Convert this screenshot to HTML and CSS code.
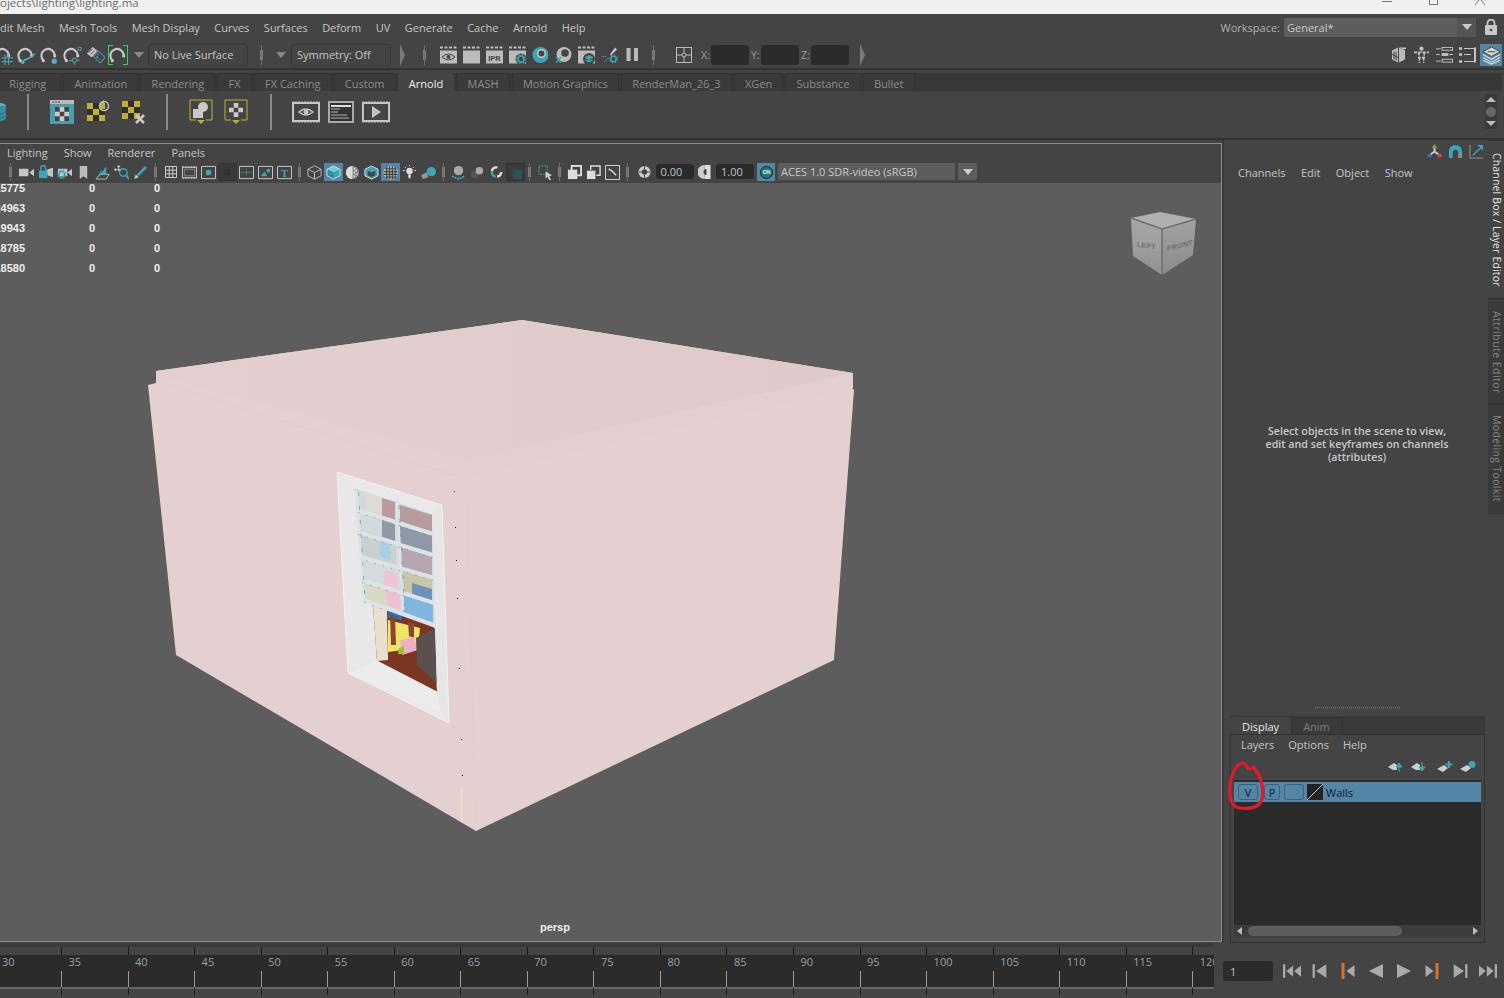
FILE: index.html
```html
<!DOCTYPE html>
<html lang="en">
<head>
<meta charset="utf-8">
<title>Maya</title>
<link rel="stylesheet" href="styles.css">
</head>
<body>
<svg class="defs" aria-hidden="true">
<symbol id="mag" viewBox="0 0 20 20"><path d="M3.500 15A7 7 0 1 1 15.500 10" fill="none" stroke="#c6c6c6" stroke-width="2.200"/><circle cx="3.500" cy="15.500" r="1.700" fill="#c6c6c6"/><circle cx="15.500" cy="10.500" r="1.700" fill="#c6c6c6"/></symbol>
<symbol id="s-grid" viewBox="0 0 20 20"><use href="#mag"/><path d="M8 12.500h12M8 16.500h12M11.500 9v11M15.500 9v11" stroke="#4ab4c4" fill="none"/></symbol>
<symbol id="s-curve" viewBox="0 0 20 20"><use href="#mag"/><path d="M6 19c0-7 7-3 13-11" stroke="#4ab4c4" stroke-width="1.600" fill="none"/><circle cx="6" cy="17" r="1.800" fill="#4ab4c4"/></symbol>
<symbol id="s-point" viewBox="0 0 20 20"><use href="#mag"/><circle cx="15" cy="16" r="2.800" fill="#4ab4c4"/></symbol>
<symbol id="s-view" viewBox="0 0 20 20"><use href="#mag"/><circle cx="17.500" cy="3" r="1.800" fill="none" stroke="#4ab4c4"/><circle cx="12" cy="15" r="2.200" fill="none" stroke="#4ab4c4"/><path d="M9.500 15.500H6M12 17.500V20M14.500 15h3" stroke="#4ab4c4"/></symbol>
<symbol id="s-surf" viewBox="0 0 20 20"><path d="M1 8l6-7 5 4-6 7z" fill="#c6c6c6"/><path d="M3 7l4-4M5 9l4-4" stroke="#444"/><path d="M8 11l5-6 7 7-5 6z" fill="none" stroke="#4ab4c4"/><path d="M11 11l5 4M13 8l-2 6" stroke="#4ab4c4" stroke-dasharray="2 1"/></symbol>
<symbol id="clap" viewBox="0 0 17 18"><path d="M0 1.500h17" stroke="#bbb" stroke-width="2" stroke-dasharray="3 1.500"/><rect y="4.500" width="17" height="13" fill="#bbb"/></symbol>
<symbol id="r-eye" viewBox="0 0 17 18"><use href="#clap"/><path d="M2 11q6.500-6 13 0q-6.500 6-13 0z" fill="none" stroke="#444"/><circle cx="8.500" cy="11" r="2" fill="#444"/></symbol>
<symbol id="r-ipr" viewBox="0 0 17 18"><use href="#clap"/><text x="8.500" y="15" class="ipr" text-anchor="middle">IPR</text></symbol>
<symbol id="gear" viewBox="0 0 10 10"><circle cx="5" cy="5" r="3" fill="none" stroke="#3ba6b5" stroke-width="1.600"/><circle cx="5" cy="5" r="4.300" fill="none" stroke="#3ba6b5" stroke-width="1.400" stroke-dasharray="1.600 1.800"/></symbol>
<symbol id="r-gear" viewBox="0 0 17 18"><use href="#clap"/><circle cx="12" cy="13" r="5.500" fill="#444"/><use href="#gear" x="7" y="8" width="10" height="10"/></symbol>
<symbol id="r-hyper" viewBox="0 0 17 17"><circle cx="8.500" cy="8.500" r="8" fill="#3ba6b5"/><circle cx="9.500" cy="7" r="4.500" fill="#c8c8c8"/><circle cx="9.500" cy="7" r="3" fill="#444"/></symbol>
<symbol id="r-x" viewBox="0 0 17 17"><circle cx="9" cy="8" r="7.500" fill="#bbb"/><circle cx="10" cy="6.500" r="3.800" fill="#444"/><text x="3.500" y="16.500" class="tx" text-anchor="middle">x</text></symbol>
<symbol id="r-stack" viewBox="0 0 17 18"><use href="#clap"/><circle cx="11" cy="13" r="6" fill="#444"/><path d="M7 11.500l4-2 4 2-4 2zM7 14l4 2 4-2" fill="#3ba6b5" stroke="#3ba6b5"/></symbol>
<symbol id="r-brush" viewBox="0 0 17 17"><path d="M9 8L14 1l2 2-6 6z" fill="#c4c4c4"/><path d="M1 10h4M4 15l4-4" stroke="#3ba6b5" stroke-dasharray="2 1"/><use href="#gear" x="8" y="8" width="9" height="9"/></symbol>
<symbol id="pause" viewBox="0 0 12 14"><rect width="4" height="13" fill="#bbb"/><rect x="7.500" width="4" height="13" fill="#bbb"/></symbol>
<symbol id="box" viewBox="0 0 16 16"><rect x=".5" y=".5" width="15" height="15" fill="none" stroke="#bbb"/><path d="M8 0v16M0 8h16" stroke="#bbb"/><circle cx="8" cy="8" r="2" fill="#444" stroke="#bbb"/></symbol>
<symbol id="cube-sm" viewBox="0 0 17 17"><path d="M2 4l6-3v15l-6-3zM9 1l6 3v9l-6 3z" fill="#bbb"/><path d="M4 5v8M6 5v9M2 8l6 3" stroke="#444"/><path d="M9 1h7v1l-2 1z" fill="#ccc"/></symbol>
<symbol id="man" viewBox="0 0 16 17"><circle cx="8" cy="2.500" r="2" fill="#c4c4c4"/><path d="M1 6h14M5.500 6v5h5V6M6 11v5M10 11v5" stroke="#c4c4c4" stroke-width="1.500" stroke-dasharray="3 1" fill="none"/></symbol>
<symbol id="list" viewBox="0 0 18 17"><path d="M0 2h5M0 8h4M0 15h5M14 8h4" stroke="#c4c4c4"/><rect x="6.500" y=".5" width="11" height="3" fill="none" stroke="#c4c4c4"/><rect x="6.500" y="13" width="11" height="3" fill="none" stroke="#c4c4c4"/><rect x="6" y="6.500" width="7" height="3" fill="#c4c4c4"/></symbol>
<symbol id="tool" viewBox="0 0 17 17"><path d="M0 2h3M0 8h3M0 15h3" stroke="#c4c4c4" stroke-width="2.500"/><path d="M5 2h11M5 8h7M5 15h10" stroke="#c4c4c4"/><path d="M16 1v15" stroke="#c4c4c4" stroke-width="2"/></symbol>
<symbol id="layers" viewBox="0 0 20 20"><path d="M10 1l9 5-9 5-9-5z" fill="#d4d4d4" stroke="#444"/><path d="M1 9l9 5 9-5M1 12l9 5 9-5M1 15l9 4 9-4" fill="none" stroke="#ddd" stroke-width="1.200"/><path d="M6 6h8" stroke="#444"/></symbol>
<symbol id="cyl" viewBox="0 0 8 20"><ellipse cx="0" cy="4" rx="6" ry="3" fill="#4fb3c2"/><path d="M-6 4v12a6 3 0 0 0 12 0V4" fill="#3b8e9c"/><path d="M-6 9a6 3 0 0 0 12 0M-6 13a6 3 0 0 0 12 0" stroke="#2d6f7a" fill="none"/></symbol>
<symbol id="check" viewBox="0 0 24 24"><path d="M0 3h6v6H0zM12 3h6v6h-6zM6 9h6v6H6zM0 15h6v6H0zM12 15h6v6h-6z" fill="#c2ad35"/><path d="M6 3h6v6H6zM0 9h6v6H0zM12 9h6v6h-6zM6 15h6v6H6z" fill="#2e2e2e"/></symbol>
<symbol id="sh-tex" viewBox="0 0 24 24"><rect width="24" height="24" fill="#4a9fae"/><rect y="0" width="24" height="4" fill="#bbb"/><path d="M2 2h2M5 2h2M8 2h2" stroke="#444"/><rect x="5" y="7" width="14" height="14" fill="#ccc"/><path d="M5 7h4.700v4.700H5zM14.300 7H19v4.700h-4.700zM9.700 11.700h4.600v4.600H9.700zM5 16.300h4.700V21H5zM14.300 16.300H19V21h-4.700z" fill="#444"/></symbol>
<symbol id="sh-ref" viewBox="0 0 24 24"><use href="#check"/><circle cx="17" cy="6" r="4.500" fill="none" stroke="#bbb" stroke-width="1.500"/><path d="M17 0l-3 2 3 2z" fill="#bbb"/></symbol>
<symbol id="sh-del" viewBox="0 0 24 24"><use href="#check" y="-2"/><path d="M14 15l8 8M22 15l-8 8" stroke="#c9c9c9" stroke-width="2.500"/></symbol>
<symbol id="sh-yel1" viewBox="0 0 24 26"><path d="M6 1H1v20h6M18 1h5v20h-6" fill="none" stroke="#c2ad35"/><path d="M6 1h12" stroke="#c2ad35"/><path d="M8 21h8l-4 4z" fill="#c2ad35"/><rect x="4" y="10" width="10" height="9" fill="#c8c8c8"/><circle cx="14" cy="8" r="5" fill="#c8c8c8"/></symbol>
<symbol id="sh-yel2" viewBox="0 0 24 26"><path d="M6 1H1v20h6M18 1h5v20h-6M6 1h12" fill="none" stroke="#c2ad35"/><path d="M8 21h8l-4 4z" fill="#c2ad35"/><rect x="5" y="4" width="14" height="14" fill="#c9c9c9"/><path d="M5 4h4.700v4.700H5zM14.300 4H19v4.700h-4.700zM9.700 8.700h4.600v4.600H9.700zM5 13.300h4.700V18H5zM14.300 13.300H19V18h-4.700z" fill="#444"/></symbol>
<symbol id="frm" viewBox="0 0 28 22"><rect x="1" y="2" width="26" height="18" fill="none" stroke="#c4c4c4" stroke-width="2"/><path d="M0 1h28M0 21h28" stroke="#c4c4c4" stroke-dasharray="2 1"/></symbol>
<symbol id="sh-eye" viewBox="0 0 28 22"><use href="#frm"/><path d="M7 11q7-6 14 0q-7 6-14 0z" fill="none" stroke="#c4c4c4" stroke-width="1.500"/><circle cx="14" cy="11" r="2.500" fill="#c4c4c4"/></symbol>
<symbol id="sh-log" viewBox="0 0 26 22"><rect x="0" y="0" width="26" height="22" fill="#aaa"/><rect x="2" y="2" width="22" height="18" fill="#333"/><rect x="3" y="4" width="20" height="2" fill="#ddd"/><path d="M3 8h9M3 11h7M3 14h16M3 17h18" stroke="#888" stroke-width="1.500"/></symbol>
<symbol id="sh-play" viewBox="0 0 28 22"><use href="#frm"/><path d="M10 5l9 6-9 6z" fill="#c4c4c4"/></symbol>
<symbol id="cam" viewBox="0 0 16 16"><rect x="0" y="4" width="10" height="8" fill="#c4c4c4"/><path d="M11 8l5-4v8z" fill="#c4c4c4"/></symbol>
<symbol id="cam-lock" viewBox="0 0 16 16"><path d="M9 5l1 6 6 2V3z" fill="#c4c4c4"/><rect x="1" y="6" width="9" height="8" fill="#3ba6b5"/><path d="M3 6V3a2.500 2.500 0 0 1 5 0v3" fill="none" stroke="#3ba6b5" stroke-width="1.500"/></symbol>
<symbol id="cam-gear" viewBox="0 0 16 16"><rect x="1" y="4" width="10" height="8" fill="#c4c4c4"/><path d="M11 8l5-4v8z" fill="#c4c4c4"/><use href="#gear" y="5" width="10" height="10"/></symbol>
<symbol id="bm" viewBox="0 0 16 16"><path d="M4 1h8v14l-4-3-4 3z" fill="#bbb"/></symbol>
<symbol id="plane" viewBox="0 0 16 16"><path d="M1 15l4-5h10l-3 5z" fill="none" stroke="#bbb"/><path d="M6 10l6-9v9z" fill="#3ba6b5"/><path d="M2 14l5-9v5z" fill="#3ba6b5"/></symbol>
<symbol id="lens" viewBox="0 0 16 16"><circle cx="10" cy="8" r="4" fill="none" stroke="#3ba6b5" stroke-width="1.500"/><path d="M13 11l3 4" stroke="#3ba6b5" stroke-width="2"/><path d="M5 1v6M1 5h6" stroke="#ccc"/><path d="M5 0l2 2H3zM0 5l2-2v4z" fill="#ccc"/></symbol>
<symbol id="pen" viewBox="0 0 16 16"><path d="M4 10L13 1l2 2-9 9z" fill="#3ba6b5"/><path d="M1 15l2-5 3 3z" fill="#ccc"/></symbol>
<symbol id="grid" viewBox="0 0 12 12"><path d="M.5.500h11v11H.5zM4.200.500v11M7.800.500v11M.5 4.200h11M.5 7.800h11" fill="none" stroke="#ccc"/></symbol>
<symbol id="gate" viewBox="0 0 16 14"><path d="M.5 1.500h15v11H.5z" fill="none" stroke="#ccc"/><path d="M2.500 3.500h11v7h-11z" fill="none" stroke="#888"/><path d="M0 1h16M0 13h16" stroke="#ccc" stroke-dasharray="2 1"/></symbol>
<symbol id="rdot" viewBox="0 0 16 14"><path d="M.5.500h15v13H.5z" fill="none" stroke="#ccc"/><circle cx="8" cy="7" r="3" fill="#3ba6b5"/></symbol>
<symbol id="rdark" viewBox="0 0 16 14"><circle cx="8" cy="7" r="4" fill="#303030"/></symbol>
<symbol id="rcross" viewBox="0 0 16 14"><path d="M.5.500h15v13H.5z" fill="none" stroke="#ccc"/><path d="M2 7h12M8 3v8" stroke="#3ba6b5" stroke-dasharray="1 1"/></symbol>
<symbol id="rimg" viewBox="0 0 16 14"><path d="M.5.500h15v13H.5z" fill="none" stroke="#ccc"/><path d="M3 11l4-5 3 5z" fill="#3ba6b5"/><circle cx="11" cy="5" r="2" fill="#3ba6b5"/></symbol>
<symbol id="rt" viewBox="0 0 16 14"><path d="M.5.500h15v13H.5z" fill="none" stroke="#ccc"/><text x="8" y="11.500" class="t" text-anchor="middle">T</text></symbol>
<symbol id="wire" viewBox="0 0 16 16"><path d="M8 1l7 3.500v7L8 15l-7-3.500v-7zM1 4.500L8 8l7-3.500M8 8v7" fill="none" stroke="#bbb"/></symbol>
<symbol id="solid" viewBox="0 0 16 16"><path d="M8 1l7 3.500-7 3.500-7-3.500z" fill="#6fd0dd"/><path d="M1 4.500L8 8v7l-7-3.500z" fill="#2f8c9c"/><path d="M15 4.500L8 8v7l7-3.500z" fill="#3ba6b5"/><path d="M8 1l7 3.500v7L8 15l-7-3.500v-7z" fill="none" stroke="#ddd"/></symbol>
<symbol id="half" viewBox="0 0 16 16"><circle cx="8" cy="8" r="7" fill="#888"/><path d="M8 1a7 7 0 0 0 0 14z" fill="#ddd"/><path d="M10 3v2M12 5v2M10 7v2M13 9v2M10 11v2" stroke="#ddd" stroke-width="1.500"/></symbol>
<symbol id="boxtx" viewBox="0 0 16 16"><path d="M8 1l7 3.500v7L8 15l-7-3.500v-7z" fill="#3ba6b5" stroke="#ddd"/><path d="M4 6l4 2 4-2v5l-4 2-4-2z" fill="#444"/></symbol>
<symbol id="chk" viewBox="0 0 16 16"><circle cx="8" cy="8" r="7.500" fill="#bbb"/><path d="M2 4h12M1 7h14M1 10h14M3 13h10M4 1v14M7 1v14M10 1v14M13 2v12" stroke="#444" stroke-width="1.300"/></symbol>
<symbol id="bulb" viewBox="0 0 16 16"><circle cx="8" cy="6.500" r="3.500" fill="#ddd"/><path d="M6.500 10h3l-.5 4H7z" fill="#ddd"/><path d="M1 6h2M13 6h2M3 2l1 1M13 2l-1 1M8 0v1" stroke="#ddd"/></symbol>
<symbol id="shad" viewBox="0 0 16 16"><circle cx="11" cy="7" r="5" fill="#3ba6b5"/><path d="M0 11l6-3 2 5-6 2z" fill="#999"/></symbol>
<symbol id="ball-grid" viewBox="0 0 16 16"><circle cx="8" cy="6" r="5" fill="#aaa"/><path d="M1 12l7 3 7-3" fill="none" stroke="#3ba6b5" stroke-width="2" stroke-dasharray="2 1"/></symbol>
<symbol id="balls" viewBox="0 0 16 16"><circle cx="5" cy="10" r="4" fill="#555"/><circle cx="10" cy="6" r="4" fill="#aaa"/></symbol>
<symbol id="ring" viewBox="0 0 14 14"><circle cx="7" cy="7" r="5" fill="none" stroke="#3ba6b5" stroke-width="2.500" stroke-dasharray="7 1.500 7 16"/><circle cx="7" cy="7" r="5" fill="none" stroke="#ddd" stroke-width="2.500" stroke-dasharray="8 9" stroke-dashoffset="-16"/></symbol>
<symbol id="dk" viewBox="0 0 16 16"><rect x="1" y="1" width="9" height="9" fill="#3c3c3c"/><rect x="5" y="5" width="10" height="10" fill="#2f5159"/></symbol>
<symbol id="sel" viewBox="0 0 16 16"><path d="M1 1h9v9H1z" fill="none" stroke="#3ba6b5" stroke-dasharray="2 1"/><path d="M8 7l7 4-3 1 2 4-2 .5-2-4-2 2z" fill="#ccc"/></symbol>
<symbol id="iso1" viewBox="0 0 16 16"><rect x="5" y="1" width="10" height="10" fill="none" stroke="#ddd" stroke-width="2"/><rect x="1" y="5" width="10" height="10" fill="#ddd"/></symbol>
<symbol id="iso2" viewBox="0 0 16 16"><path d="M5 5V1h10v10h-4" fill="none" stroke="#ddd" stroke-width="1.500"/><rect x="1" y="6" width="9" height="9" fill="#ddd"/></symbol>
<symbol id="iso3" viewBox="0 0 16 16"><path d="M.5.500h15v15H.5z" fill="none" stroke="#ddd"/><path d="M4 4l2 2M6 5l6 6" stroke="#ddd" stroke-width="1.500"/></symbol>
<symbol id="aper" viewBox="0 0 14 14"><circle cx="7" cy="7" r="6.500" fill="#ccc"/><circle cx="7" cy="7" r="3" fill="#444"/><path d="M7 0v4M13 7H9M7 14v-4M1 7h4" stroke="#444"/></symbol>
<symbol id="gam" viewBox="0 0 12 14"><path d="M6 0a6 6 0 0 0 0 14z" fill="#ccc"/><rect x="6" y="0" width="6" height="14" fill="#ddd"/><path d="M9 4a3 3 0 0 0 0 6z" fill="#444" transform="translate(-1 0)"/></symbol>
<symbol id="ocio" viewBox="0 0 16 16"><circle cx="8" cy="8" r="6.500" fill="#2a6f7c" stroke="#222"/><text x="8" y="10" class="ontxt" text-anchor="middle">ON</text></symbol>
<symbol id="axis" viewBox="0 0 16 16"><path d="M8 8V4M8 8l-4 3M8 8l4 3" stroke="#ccc" stroke-width="2"/><path d="M8 0l3 4H5z" fill="#77a83a"/><path d="M0 12l4-2 1 4H1z" fill="#3c6fd0"/><path d="M16 14h-4l-1-3 4-1z" fill="#d84a4a"/></symbol>
<symbol id="hsphere" viewBox="0 0 16 16"><path d="M1 15V8a7 7 0 0 1 14 0v7h-4V9a3 3 0 0 0-6 0v6z" fill="#3ba6b5"/><path d="M11 15V10h4v5z" fill="#888"/></symbol>
<symbol id="grow" viewBox="0 0 16 16"><path d="M1 1v14h14" fill="none" stroke="#999"/><path d="M4 12L14 3" stroke="#3ba6b5" stroke-width="1.600"/><path d="M15 1v6l-6-6z" fill="#3ba6b5"/></symbol>
<symbol id="l-up" viewBox="0 0 16 12"><path d="M1 6l6-4 3 2v5H6z" fill="#ccc"/><path d="M12 11V5M9 6l3-4 3 4z" stroke="#3ba6b5" fill="#3ba6b5"/></symbol>
<symbol id="l-dn" viewBox="0 0 16 12"><path d="M1 6l6-4 3 2v5H6z" fill="#ccc"/><path d="M12 1v6M9 6l3 4 3-4z" stroke="#3ba6b5" fill="#3ba6b5"/></symbol>
<symbol id="l-add" viewBox="0 0 16 12"><path d="M0 8l7-4 4 3-5 4z" fill="#ccc"/><path d="M12 0v7M8.500 3.500h7" stroke="#3ba6b5" stroke-width="2"/></symbol>
<symbol id="l-obj" viewBox="0 0 16 12"><path d="M0 8l7-4 4 3-5 4z" fill="#ccc"/><circle cx="12" cy="3.500" r="3.500" fill="#3ba6b5"/></symbol>
<symbol id="lock" viewBox="0 0 12 16"><rect y="6" width="12" height="10" rx="1" fill="#c8c8c8"/><path d="M2.500 6V4a3.500 3.500 0 0 1 7 0v2" fill="none" stroke="#c8c8c8" stroke-width="1.800"/><circle cx="6" cy="11" r="1.300" fill="#444"/></symbol>
<symbol id="t1" viewBox="0 0 16 14"><rect y="1" width="2" height="12" fill="#aaa"/><path d="M9 2L3 7l6 5zM16 2l-6 5 6 5z" fill="#aaa"/></symbol>
<symbol id="t2" viewBox="0 0 13 14"><rect y="1" width="2" height="12" fill="#aaa"/><path d="M12 1L3 7l9 6z" fill="#aaa"/></symbol>
<symbol id="t3" viewBox="0 0 13 16"><rect y="0" width="3" height="16" fill="#d8732c"/><path d="M13 2L5 8l8 6z" fill="#aaa"/></symbol>
<symbol id="t4" viewBox="0 0 14 16"><path d="M14 1L0 8l14 7z" fill="#aaa"/></symbol>
<symbol id="t5" viewBox="0 0 14 16"><path d="M0 1l14 7-14 7z" fill="#aaa"/></symbol>
<symbol id="t6" viewBox="0 0 13 16"><rect x="10" width="3" height="16" fill="#d8732c"/><path d="M0 2l8 6-8 6z" fill="#aaa"/></symbol>
<symbol id="t7" viewBox="0 0 13 14"><rect x="11" y="1" width="2" height="12" fill="#aaa"/><path d="M1 1l9 6-9 6z" fill="#aaa"/></symbol>
<symbol id="t8" viewBox="0 0 16 14"><rect x="14" y="1" width="2" height="12" fill="#aaa"/><path d="M7 2l6 5-6 5zM0 2l6 5-6 5z" fill="#aaa"/></symbol>
</svg>

<div class="app">
  <header class="titlebar">
    <span class="title-text">ojects\lighting\lighting.ma</span>
    <span class="win-ctl">
      <span class="win-min"></span>
      <span class="win-max"></span>
      <svg class="win-x" viewBox="0 0 12 5"><path d="M1 5L5 0M11 5L7 0" stroke="#777" fill="none"/></svg>
    </span>
  </header>

  <nav class="menubar">
    <span class="clip-e">Edit Mesh</span><span>Mesh Tools</span><span>Mesh Display</span><span>Curves</span><span>Surfaces</span><span>Deform</span><span>UV</span><span>Generate</span><span>Cache</span><span>Arnold</span><span>Help</span>
    <div class="workspace">
      <label>Workspace:</label>
      <div class="ws-combo"><span>General*</span><b class="ws-arrow"><i class="tri"></i></b></div>
      <svg class="ws-lock"><use href="#lock"/></svg>
    </div>
  </nav>

  <div class="statusbar">
    <span class="st first"><svg class="i18"><use href="#s-grid"/></svg></span>
    <span class="st"><svg class="i18"><use href="#s-curve"/></svg></span>
    <span class="st"><svg class="i18"><use href="#s-point"/></svg></span>
    <span class="st"><svg class="i18"><use href="#s-view"/></svg></span>
    <span class="st"><svg class="i18"><use href="#s-surf"/></svg></span>
    <span class="st bracket"><svg class="i18"><use href="#mag"/></svg></span>
    <span class="drop"><i class="tri dim"></i></span>
    <span class="live">No Live Surface</span>
    <span class="sep sep-a"></span>
    <span class="drop drop-b"><i class="tri dim"></i></span>
    <span class="live">Symmetry: Off</span>
    <span class="chev chev-a"></span>
    <span class="sep sep-b"></span>
    <span class="st"><svg class="i17"><use href="#r-eye"/></svg></span>
    <span class="st"><svg class="i17"><use href="#clap"/></svg></span>
    <span class="st"><svg class="i17"><use href="#r-ipr"/></svg></span>
    <span class="st"><svg class="i17"><use href="#r-gear"/></svg></span>
    <span class="st"><svg class="i17"><use href="#r-hyper"/></svg></span>
    <span class="st"><svg class="i17"><use href="#r-x"/></svg></span>
    <span class="st"><svg class="i17"><use href="#r-stack"/></svg></span>
    <span class="st"><svg class="i17"><use href="#r-brush"/></svg></span>
    <span class="st"><svg class="i13"><use href="#pause"/></svg></span>
    <span class="sep sep-c"></span>
    <span class="st st-box"><svg class="i16"><use href="#box"/></svg></span>
    <span class="xyz">X:</span><span class="xyz-f"></span>
    <span class="xyz">Y:</span><span class="xyz-f"></span>
    <span class="xyz">Z:</span><span class="xyz-f"></span>
    <span class="chev chev-b"></span>
    <div class="st-right">
      <svg class="i17"><use href="#cube-sm"/></svg>
      <svg class="i17"><use href="#man"/></svg>
      <svg class="i17"><use href="#list"/></svg>
      <svg class="i17"><use href="#tool"/></svg>
      <span class="st-layers"><svg class="i18"><use href="#layers"/></svg></span>
    </div>
  </div>
  <div class="rule"></div>

  <div class="tabs">
    <span class="tab t-first">Rigging</span><span class="tab">Animation</span><span class="tab">Rendering</span><span class="tab">FX</span><span class="tab">FX Caching</span><span class="tab">Custom</span><span class="tab active">Arnold</span><span class="tab">MASH</span><span class="tab">Motion Graphics</span><span class="tab">RenderMan_26_3</span><span class="tab">XGen</span><span class="tab">Substance</span><span class="tab">Bullet</span>
  </div>

  <div class="shelf">
    <svg class="cyl"><use href="#cyl"/></svg>
    <span class="sh-sep sh-s1"></span>
    <svg class="sh-i sh-a"><use href="#sh-tex"/></svg>
    <svg class="sh-i sh-b"><use href="#sh-ref"/></svg>
    <svg class="sh-i sh-b2"><use href="#sh-del"/></svg>
    <span class="sh-sep sh-s2"></span>
    <svg class="sh-y"><use href="#sh-yel1"/></svg>
    <svg class="sh-y sh-c"><use href="#sh-yel2"/></svg>
    <span class="sh-sep sh-s3"></span>
    <svg class="sh-f"><use href="#sh-eye"/></svg>
    <svg class="sh-f sh-d"><use href="#sh-log"/></svg>
    <svg class="sh-f sh-d"><use href="#sh-play"/></svg>
    <div class="sh-scroll"><i class="up"></i><i class="dot"></i><i class="dn"></i></div>
  </div>
  <div class="rule-thin"></div>

  <main class="main">
    <section class="view-frame">
      <div class="panel-menu"><span>Lighting</span><span>Show</span><span>Renderer</span><span>Panels</span></div>
      <div class="panel-bar">
        <span class="sep sep-p0"></span>
        <span class="c"><svg class="i15"><use href="#cam"/></svg></span>
        <span class="c"><svg class="i15"><use href="#cam-lock"/></svg></span>
        <span class="c"><svg class="i15"><use href="#cam-gear"/></svg></span>
        <span class="c"><svg class="i15"><use href="#bm"/></svg></span>
        <span class="c"><svg class="i15"><use href="#plane"/></svg></span>
        <span class="c"><svg class="i15"><use href="#lens"/></svg></span>
        <span class="c"><svg class="i15"><use href="#pen"/></svg></span>
        <span class="sep sep-p"></span>
        <span class="c"><svg class="i12"><use href="#grid"/></svg></span>
        <span class="c"><svg class="i15"><use href="#gate"/></svg></span>
        <span class="c"><svg class="i15"><use href="#rdot"/></svg></span>
        <span class="c dark"><svg class="i15"><use href="#rdark"/></svg></span>
        <span class="c"><svg class="i15"><use href="#rcross"/></svg></span>
        <span class="c"><svg class="i15"><use href="#rimg"/></svg></span>
        <span class="c"><svg class="i15"><use href="#rt"/></svg></span>
        <span class="sep sep-p"></span>
        <span class="c"><svg class="i15"><use href="#wire"/></svg></span>
        <span class="c on"><svg class="i15"><use href="#solid"/></svg></span>
        <span class="c"><svg class="i15"><use href="#half"/></svg></span>
        <span class="c"><svg class="i15"><use href="#boxtx"/></svg></span>
        <span class="c on"><svg class="i15"><use href="#chk"/></svg></span>
        <span class="c"><svg class="i15"><use href="#bulb"/></svg></span>
        <span class="c"><svg class="i15"><use href="#shad"/></svg></span>
        <span class="sep sep-p"></span>
        <span class="c"><svg class="i15"><use href="#ball-grid"/></svg></span>
        <span class="c"><svg class="i15"><use href="#balls"/></svg></span>
        <span class="c"><svg class="i13"><use href="#ring"/></svg></span>
        <span class="c dark"><svg class="i15"><use href="#dk"/></svg></span>
        <span class="sep sep-q"></span>
        <span class="c"><svg class="i15"><use href="#sel"/></svg></span>
        <span class="sep sep-r"></span>
        <span class="c"><svg class="i15"><use href="#iso1"/></svg></span>
        <span class="c"><svg class="i15"><use href="#iso2"/></svg></span>
        <span class="c"><svg class="i15"><use href="#iso3"/></svg></span>
        <span class="sep sep-s"></span>
        <span class="c c-ap"><svg class="i13"><use href="#aper"/></svg></span>
        <span class="num">0.00</span>
        <span class="c c-ga"><svg class="i13"><use href="#gam"/></svg></span>
        <span class="num">1.00</span>
        <span class="c on c-on"><svg class="i15"><use href="#ocio"/></svg></span>
        <span class="ocio">ACES 1.0 SDR-video (sRGB)</span>
        <span class="ocio-arrow"><i class="tri"></i></span>
      </div>
      <div class="canvas">
        <svg class="scene" viewBox="0 183 1221 758">
          <defs>
            <linearGradient id="roof" x1="0" x2="1" y1="0" y2="0"><stop offset="0" stop-color="#e3cfd1"/><stop offset="1" stop-color="#dfc9ca"/></linearGradient>
            <linearGradient id="cubeL" x1="0" x2="0" y1="0" y2="1"><stop offset="0" stop-color="#a8a8a8"/><stop offset="1" stop-color="#929292"/></linearGradient>
            <linearGradient id="cubeR" x1="0" x2="0" y1="0" y2="1"><stop offset="0" stop-color="#a2a2a2"/><stop offset="1" stop-color="#8a8a8a"/></linearGradient>
          </defs>
          <polygon points="156,371 522,320 853,373 852,388 854,390 834,660 476,831 176,655 148,385 156,383" fill="#e4cfd1"/>
          <polygon points="156,375 156,371 522,320 853,373 466,460" fill="url(#roof)"/>
          <polygon points="466,460 853,373 853,388 467,477" fill="#e3ced0"/>
          <path d="M156 381L460 477" stroke="#e0cbcd" fill="none"/>
          <path d="M466 462L476 831" stroke="#e3cdcf" fill="none"/>
          <!-- window -->
          <polygon points="337,472 442,505 449,723 348,673" fill="#e9e9e9"/>
          <polygon points="354,488 432,514 437,692 377,661 373,605 363,601" fill="#d3d9dd"/>
          <polygon points="367,493 382,498 382,520 367,514" fill="#dedcd2"/>
          <polygon points="382,498 395,502 395,525 382,520" fill="#b99b9c"/>
          <polygon points="400,505 432,515 432,535 400,526" fill="#b89c9d"/>
          <polygon points="400,526 432,535 432,555 400,547" fill="#8e98a6"/>
          <polygon points="400,547 432,555 432,579 400,570" fill="#b6a6b4"/>
          <polygon points="400,570 432,579 432,603 400,594" fill="#c9c6a8"/>
          <polygon points="412,583 432,589 432,603 412,598" fill="#6e93b8"/>
          <polygon points="403,594 433,603 433,626 403,617" fill="#7fb5df"/>
          <polygon points="382,520 395,525 395,545 382,540" fill="#8f98a4"/>
          <polygon points="360,530 396,541 396,566 360,555" fill="#c8d0d0"/>
          <polygon points="380,536 390,540 390,560 380,556" fill="#a6d0e4"/>
          <polygon points="362,556 396,566 396,590 362,580" fill="#d4dade"/>
          <polygon points="384,570 397,574 397,590 384,586" fill="#eec4d4"/>
          <polygon points="364,580 397,590 400,612 368,600" fill="#d8d8c4"/>
          <polygon points="385,588 402,594 400,610 388,605" fill="#eebfd2"/>
          <polygon points="387,611 434,626 437,692 377,661 373,605" fill="#7b3520"/>
          <polygon points="373,605 387,610 388,660 377,661" fill="#e8dfcc"/>
          <polygon points="388,620 420,628 418,648 388,652" fill="#f0e567"/>
          <polygon points="388,610 402,615 402,620 388,618" fill="#1f74b4"/>
          <polygon points="390,615 395,616 396,645 391,645" fill="#8c4632"/>
          <polygon points="408,622 414,624 414,638 409,636" fill="#8c4632"/>
          <polygon points="400,640 414,637 418,650 402,655" fill="#eeb0c8"/>
          <polygon points="399,648 404,646 404,654 398,654" fill="#9ac23c"/>
          <polygon points="416,638 435,628 437,684 417,665" fill="#5e4f4f"/>
          <g stroke="#dde2e6" stroke-width="4" fill="none">
            <path d="M358 510L433 534"/><path d="M358 532L433 555"/><path d="M358 556L434 578"/><path d="M362 580L434 603"/><path d="M364 600L436 626"/>
            <path d="M397 500L403 610" stroke-width="3"/>
            <path d="M356 492L363 600"/>
          </g>
          <g stroke="#6f9ab2" fill="none" stroke-dasharray="1.500 7" stroke-opacity=".8">
            <path d="M358 512.500L433 536.500"/><path d="M358 534.500L433 557.500"/><path d="M358 558.500L434 580.500"/><path d="M362 582.500L434 605.500"/><path d="M364 602.500L436 628.500"/>
            <path d="M358.500 492L365 600" stroke-dasharray="4 10"/><path d="M399 505L404.500 606" stroke-dasharray="4 10"/>
          </g>
          <polygon points="349,674 376,660 438,692 441,712" fill="#ececec"/>
          <polygon points="437,692 432,514 442,505 449,723 441,712" fill="#e6e6e6"/>
          <polygon points="337,472 354,488 363,601 376,660 349,674" fill="#e8e8e8"/>
          <path d="M337 472L442 505L449 723L348 673Z" fill="none" stroke="#f2f2f2"/>
          <g fill="#111">
            <rect x="454" y="491" width="1" height="1"/><rect x="455" y="527" width="1" height="1"/><rect x="456" y="560" width="1" height="1"/><rect x="457" y="598" width="1" height="1"/><rect x="459" y="668" width="1" height="1"/><rect x="461" y="739" width="1" height="1"/><rect x="462" y="775" width="1" height="1"/>
          </g>
          <path d="M461.500 790V822" stroke="#e9e5b8" stroke-width="1.500"/>
          <!-- view cube -->
          <polygon points="1131,218 1160,212 1196,219 1162,229" fill="#b0b0b0"/>
          <polygon points="1131,218 1162,229 1162,275 1133,256" fill="url(#cubeL)"/>
          <polygon points="1162,229 1196,219 1193,255 1162,275" fill="url(#cubeR)"/>
          <path d="M1131 218L1162 229L1196 219M1162 229V275" stroke="#6e6e6e" stroke-width="1.500" fill="none"/>
          <text class="cube-t" transform="matrix(1 .12 0 1 1137 247)">LEFT</text>
          <text class="cube-t" transform="matrix(1 -.24 0 1 1167 251)">FRONT</text>
        </svg>
        <div class="hud">
          <span>15775</span><span>0</span><span>0</span>
          <span>24963</span><span>0</span><span>0</span>
          <span>19943</span><span>0</span><span>0</span>
          <span>18785</span><span>0</span><span>0</span>
          <span>18580</span><span>0</span><span>0</span>
        </div>
        <div class="persp">persp</div>
      </div>
    </section>

    <aside class="right">
      <div class="right-body">
        <div class="cb-icons">
          <svg class="i15"><use href="#axis"/></svg>
          <svg class="i15"><use href="#hsphere"/></svg>
          <svg class="i15"><use href="#grow"/></svg>
        </div>
        <div class="cb-menu"><span>Channels</span><span>Edit</span><span>Object</span><span>Show</span></div>
        <div class="cb-msg"><p>Select objects in the scene to view,<br>edit and set keyframes on channels<br>(attributes)</p></div>
        <div class="handle"></div>
        <div class="layers">
          <div class="l-tabs"><span class="l-tab active">Display</span><span class="l-tab">Anim</span></div>
          <div class="l-body">
            <div class="l-menu"><span>Layers</span><span>Options</span><span>Help</span></div>
            <div class="l-icons">
              <svg class="li"><use href="#l-up"/></svg>
              <svg class="li"><use href="#l-dn"/></svg>
              <svg class="li li-w"><use href="#l-add"/></svg>
              <svg class="li"><use href="#l-obj"/></svg>
            </div>
            <div class="l-list">
              <div class="l-row">
                <span class="btn btn-v">V</span>
                <span class="btn btn-p">P</span>
                <span class="btn btn-c"></span>
                <span class="swatch"></span>
                <span class="l-name">Walls</span>
              </div>
            </div>
            <div class="l-scroll"><i class="sl"></i><span class="thumb"></span><i class="sr"></i></div>
          </div>
          <svg class="red-ring" viewBox="1225 756 42 58"><path d="M1250 769C1246 769 1247 762 1242 763C1235 765 1231 775 1230 785C1229 797 1231 807 1240 808C1248 809 1259 809 1262 799C1264 790 1262 776 1253 767" fill="none" stroke="#e01b2b" stroke-width="3.200" stroke-linecap="round"/></svg>
        </div>
      </div>
      <div class="side-tabs">
        <div class="side on-t">Channel Box / Layer Editor</div>
        <div class="side s2">Attribute Editor</div>
        <div class="side s3">Modeling Toolkit</div>
      </div>
    </aside>
  </main>

  <footer class="timeline">
    <div class="tl-left">
      <div class="tl-gap"></div>
      <div class="tl-ruler">
        <div class="tl-cell tl-c0"><i class="tb"></i><span class="lab">30</span><i class="tk"></i><i class="tb tb2"></i></div>
        <div class="tl-cell"><i class="tb"></i><span class="lab">35</span><i class="tk"></i><i class="tb tb2"></i></div>
        <div class="tl-cell"><i class="tb"></i><span class="lab">40</span><i class="tk"></i><i class="tb tb2"></i></div>
        <div class="tl-cell"><i class="tb"></i><span class="lab">45</span><i class="tk"></i><i class="tb tb2"></i></div>
        <div class="tl-cell"><i class="tb"></i><span class="lab">50</span><i class="tk"></i><i class="tb tb2"></i></div>
        <div class="tl-cell"><i class="tb"></i><span class="lab">55</span><i class="tk"></i><i class="tb tb2"></i></div>
        <div class="tl-cell"><i class="tb"></i><span class="lab">60</span><i class="tk"></i><i class="tb tb2"></i></div>
        <div class="tl-cell"><i class="tb"></i><span class="lab">65</span><i class="tk"></i><i class="tb tb2"></i></div>
        <div class="tl-cell"><i class="tb"></i><span class="lab">70</span><i class="tk"></i><i class="tb tb2"></i></div>
        <div class="tl-cell"><i class="tb"></i><span class="lab">75</span><i class="tk"></i><i class="tb tb2"></i></div>
        <div class="tl-cell"><i class="tb"></i><span class="lab">80</span><i class="tk"></i><i class="tb tb2"></i></div>
        <div class="tl-cell"><i class="tb"></i><span class="lab">85</span><i class="tk"></i><i class="tb tb2"></i></div>
        <div class="tl-cell"><i class="tb"></i><span class="lab">90</span><i class="tk"></i><i class="tb tb2"></i></div>
        <div class="tl-cell"><i class="tb"></i><span class="lab">95</span><i class="tk"></i><i class="tb tb2"></i></div>
        <div class="tl-cell"><i class="tb"></i><span class="lab">100</span><i class="tk"></i><i class="tb tb2"></i></div>
        <div class="tl-cell"><i class="tb"></i><span class="lab">105</span><i class="tk"></i><i class="tb tb2"></i></div>
        <div class="tl-cell"><i class="tb"></i><span class="lab">110</span><i class="tk"></i><i class="tb tb2"></i></div>
        <div class="tl-cell"><i class="tb"></i><span class="lab">115</span><i class="tk"></i><i class="tb tb2"></i></div>
        <div class="tl-cell"><i class="tb"></i><span class="lab">120</span><i class="tk"></i><i class="tb tb2"></i></div>
      </div>
    </div>
    <div class="tl-right">
      <span class="frame">1</span>
      <div class="transport">
        <svg class="tp"><use href="#t1"/></svg>
        <svg class="tp"><use href="#t2"/></svg>
        <svg class="tp"><use href="#t3"/></svg>
        <svg class="tp"><use href="#t4"/></svg>
        <svg class="tp"><use href="#t5"/></svg>
        <svg class="tp"><use href="#t6"/></svg>
        <svg class="tp"><use href="#t7"/></svg>
        <svg class="tp"><use href="#t8"/></svg>
      </div>
    </div>
  </footer>
</div>
</body>
</html>
```
FILE: styles.css
```css
* { box-sizing: border-box; }
html, body { margin: 0; padding: 0; }
body { width: 1504px; height: 998px; overflow: hidden; background: #444; font: 11px/1 "Open Sans", "Liberation Sans", sans-serif; color: #c4c4c4; }
.defs { position: absolute; width: 0; height: 0; overflow: hidden; }
svg { display: block; flex: none; }
.ipr { font: bold 7.5px "Liberation Sans", sans-serif; fill: #444; }
.tx { font: bold 11px "Liberation Sans", sans-serif; fill: #3ba6b5; }
.t { font: bold 12px "Liberation Serif", serif; fill: #3ba6b5; }
.ontxt { font: bold 5.5px "Liberation Sans", sans-serif; fill: #cfe; }
.app { display: flex; flex-direction: column; width: 1504px; height: 998px; overflow: hidden; }

.i12 { width: 12px; height: 12px; } .i13 { width: 13px; height: 14px; } .i15 { width: 15px; height: 15px; }
.i16 { width: 16px; height: 16px; } .i17 { width: 17px; height: 18px; } .i18 { width: 19px; height: 19px; }

.tri { display: block; width: 0; height: 0; border: 5px solid transparent; border-top: 6px solid #ccc; border-bottom: 0; }
.tri.dim { border-top-color: #888; }
.sep { flex: none; width: 3px; height: 20px; background: linear-gradient(90deg, transparent 1px, #6e6e6e 1px 2px, transparent 2px), linear-gradient(#7c7c7c, #7c7c7c) center / 3px 10px no-repeat; }

/* title */
.titlebar { flex: none; height: 14px; background: #f0f0f0; display: flex; overflow: hidden; position: relative; }
.title-text { font: 11.5px/14px "Open Sans", sans-serif; color: #6c6c6c; margin-top: -4px; }
.win-ctl { margin-left: auto; display: flex; align-items: flex-start; }
.win-min { width: 10px; height: 1px; background: #777; margin: 1px 0 0 0; }
.win-max { width: 9px; height: 5px; border: 1px solid #777; border-top: 0; margin-left: 37px; }
.win-x { width: 12px; height: 5px; margin: 0 18px 0 36px; }

/* menu */
.menubar { flex: none; height: 28px; display: flex; align-items: center; gap: 14.5px; padding-bottom: 2px; }
.clip-e { margin-left: -6px; }
.workspace { margin-left: auto; display: flex; align-items: center; color: #b0b0b0; }
.ws-combo { width: 192px; height: 19px; margin-left: 4px; background: #5d5d5d; border-radius: 2px; display: flex; align-items: center; padding-left: 3px; color: #c8c8c8; position: relative; }
.ws-combo span { flex: 1; }
.ws-arrow { width: 19px; height: 19px; background: #545454; display: flex; align-items: center; justify-content: center; }
.ws-lock { width: 12px; height: 16px; margin: 0 7px 0 9px; }

/* status */
.statusbar { flex: none; height: 26px; display: flex; align-items: center; }
.st { flex: none; width: 23px; height: 22px; display: flex; align-items: center; justify-content: center; }
.st.first { margin-left: -8px; }
.bracket { position: relative; width: 22px; border: 1px solid transparent; }
.bracket::before, .bracket::after { content: ""; position: absolute; top: 0; bottom: 0; width: 4px; border: 1px solid #22e04a; }
.bracket::before { left: 0; border-right: 0; }
.bracket::after { right: 0; border-left: 0; }
.drop { flex: none; width: 19px; display: flex; justify-content: center; }
.drop-b { width: 21px; margin-left: 7px; }
.live { flex: none; width: 100px; height: 22px; line-height: 20px; padding-left: 5px; border: 1px solid #383838; border-radius: 3px; color: #c4c4c4; }
.sep-a { margin: 0 0 0 12px; }
.sep-b { margin-left: 18px; margin-right: 11px; }
.sep-c { margin-left: 8px; }
.chev { flex: none; height: 22px; background: #7a7a7a; clip-path: polygon(0 0, 100% 50%, 0 100%); width: 5px; }
.chev-a { margin-left: 9px; }
.chev-b { margin-left: 9px; }
.st-box { margin-left: 17px; width: 23px; }
.xyz { flex: none; width: 10px; color: #9a9a9a; font-size: 10.5px; }
.st-box + .xyz { margin-left: 6px; }
.xyz-f { flex: none; width: 38px; height: 20px; margin-right: 2px; background: #2b2b2b; border-radius: 3px; }
.st-right { margin-left: auto; display: flex; align-items: center; gap: 6px; margin-right: 2px; }
.st-layers { width: 22px; height: 22px; background: #5285a6; display: flex; align-items: center; justify-content: center; margin-left: -2px; }

.rule { flex: none; height: 5px; background: linear-gradient(#333 0 2px, #444 2px); }

/* tabs */
.tabs { flex: none; height: 18px; display: flex; gap: 2px; background: #383838; margin-right: 2px; overflow: hidden; }
.tab { flex: none; height: 18px; line-height: 19px; padding: 0 10.2px; background: #3a3a3a; border: 1px solid #333; border-bottom: 0; border-radius: 3px 3px 0 0; color: #8c8c8c; }
.tab.active { background: #444; color: #eee; border-color: #444; }
.t-first { margin-left: -2px; padding-right: 14px; }

/* shelf */
.shelf { flex: none; height: 47px; display: flex; align-items: center; position: relative; padding-bottom: 6px; }
.cyl { width: 8px; height: 20px; }
.sh-sep { flex: none; width: 2px; height: 36px; background: #8a8a8a; }
.sh-s1 { margin-left: 19px; }
.sh-i { width: 24px; height: 24px; }
.sh-a { margin-left: 21px; }
.sh-b { margin-left: 13px; }
.sh-b2 { margin-left: 11px; }
.sh-s2 { margin-left: 20px; }
.sh-y { width: 24px; height: 26px; }
.shelf .sh-y:not(.sh-c) { margin-left: 21px; }
.sh-c { margin-left: 11px; }
.sh-s3 { margin-left: 22px; }
.sh-f { width: 28px; height: 22px; }
.sh-s3 + .sh-f { margin-left: 20px; }
.sh-d { margin-left: 7px; }
.sh-scroll { margin-left: auto; margin-right: 7px; width: 12px; height: 35px; background: #3a3a3a; display: flex; flex-direction: column; align-items: center; justify-content: space-between; padding: 3px 0; }
.sh-scroll .up { width: 0; border: 5px solid transparent; border-bottom: 5px solid #bbb; border-top: 0; }
.sh-scroll .dn { width: 0; border: 5px solid transparent; border-top: 5px solid #bbb; border-bottom: 0; }
.sh-scroll .dot { width: 10px; height: 10px; border-radius: 50%; background: #666; }
.rule-thin { flex: none; height: 2px; background: #333; }

/* main */
.main { flex: none; height: 803px; display: flex; }
.view-frame { flex: none; width: 1222px; margin: 3px 0 1px; border: 1px solid #8c8c8c; border-left: 0; display: flex; flex-direction: column; }
.panel-menu { flex: none; height: 19px; display: flex; align-items: center; gap: 16px; padding: 0 0 2px 7px; background: #444; }
.panel-bar { flex: none; height: 20px; display: flex; align-items: flex-start; background: #444; }
.panel-bar .sep { height: 18px; }
.c { flex: none; width: 19px; height: 18px; display: flex; align-items: center; justify-content: center; }
.c.on { background: #5285a6; }
.c.dark { background: #3a3a3a; box-shadow: inset 0 0 0 1px #333; }
.sep-p0 { margin: 0 5px 0 9px; }
.sep-p { margin: 0 4.5px 0 3.5px; }
.sep-q { margin: 0 5px 0 3px; }
.sep-r { margin: 0 4px 0 3px; }
.sep-s { margin: 0 8px 0 4px; }
.c-ap { width: 15px; }
.num { flex: none; width: 38px; height: 15px; line-height: 15px; margin: 1px 0 0 3.5px; background: #2b2b2b; border-radius: 3px; color: #b8c4d0; padding-left: 5px; }
.c-ga { width: 16px; margin-left: 3px; }
.c-on { margin: 0 3px 0 3px; width: 18px; }
.ocio { flex: none; width: 177px; height: 17px; line-height: 17px; padding-left: 3px; background: #5d5d5d; border-radius: 2px 0 0 2px; color: #c8c8c8; }
.ocio-arrow { flex: none; width: 19px; height: 17px; margin-left: 3px; background: #5d5d5d; border-radius: 0 2px 2px 0; display: flex; align-items: center; justify-content: center; }
.canvas { flex: none; width: 1221px; height: 758px; background: #5d5d5d; position: relative; overflow: hidden; }
.scene { position: absolute; inset: 0; width: 1221px; height: 758px; }
.cube-t { font: bold 7.5px "Liberation Sans", sans-serif; fill: #6f6f6f; filter: blur(.4px); }
.hud { position: absolute; left: 0; top: -5px; display: grid; grid-template-columns: 25px 70px 65px; grid-auto-rows: 20px; align-items: center; justify-items: end; font: bold 11px "Liberation Sans", sans-serif; color: #eee; }
.persp { position: absolute; left: 540px; bottom: 8px; font: bold 11px "Liberation Sans", sans-serif; color: #eee; }

/* right */
.right { flex: none; width: 282px; display: flex; }
.right-body { flex: none; width: 266px; display: flex; flex-direction: column; padding-left: 8px; box-shadow: inset 2px 0 0 #3a3a3a; }
.cb-icons { flex: none; height: 16px; margin-top: 4px; padding-right: 4px; display: flex; justify-content: flex-end; gap: 6px; }
.cb-menu { flex: none; height: 26px; display: flex; align-items: center; gap: 15.4px; padding: 0 0 2px 8px; }
.cb-msg { flex: none; height: 518px; display: flex; align-items: center; justify-content: center; padding: 0 4px 2px 0; }
.cb-msg p { margin: 0; text-align: center; font-size: 10.7px; font-weight: 600; line-height: 13px; color: #c8c8c8; }
.handle { flex: none; height: 1px; margin: 3px 88px 0 85px; border-top: 1px dotted #777; }
.layers { flex: none; height: 227px; margin: 8px 3px 0 0; position: relative; width: 255px; background: #3a3a3a; display: flex; flex-direction: column; }
.l-tabs { flex: none; height: 18px; display: flex; align-items: flex-end; }
.l-tab { flex: none; height: 17px; line-height: 18px; padding: 0 11px; background: #3a3a3a; border: 1px solid #333; border-bottom: 0; border-radius: 3px 3px 0 0; color: #7c7c7c; }
.l-tab.active { background: #444; color: #e4e4e4; border-color: #444; }
.l-body { flex: 1; background: #444; border: 1px solid #333; display: flex; flex-direction: column; }
.l-menu { flex: none; height: 20px; display: flex; align-items: center; gap: 14px; padding: 0 0 2px 10px; }
.l-icons { flex: none; height: 25px; display: flex; align-items: center; justify-content: flex-end; gap: 7px; padding: 0 8px 2px 0; }
.li { width: 16px; height: 12px; }
.li-w { margin-left: 4px; }
.l-list { flex: none; height: 145px; margin: 0 3px; background: #2b2b2b; padding-top: 2px; }
.l-row { height: 20px; background: #5285a6; display: flex; align-items: center; padding-left: 4px; color: #10202c; }
.btn { flex: none; height: 16px; line-height: 15px; border: 1px solid #3a6076; border-radius: 3px; text-align: center; }
.btn-v { width: 20px; }
.btn-p { width: 16px; margin-left: 6px; }
.btn-c { width: 20px; margin-left: 4px; }
.swatch { flex: none; width: 16px; height: 16px; margin-left: 3px; background: linear-gradient(135deg, #222 0 47%, #ccc 47% 53%, #222 53%); }
.l-name { margin-left: 3px; }
.l-scroll { flex: none; height: 12px; margin: 0 3px; background: #3c3c3c; display: flex; align-items: center; padding: 0 3px; justify-content: space-between; position: relative; }
.sl { width: 0; border: 4px solid transparent; border-right: 5px solid #bbb; border-left: 0; }
.sr { width: 0; border: 4px solid transparent; border-left: 5px solid #bbb; border-right: 0; }
.thumb { width: 154px; height: 10px; border-radius: 5px; background: #5d5d5d; margin: 0 auto 0 6px; }
.red-ring { position: absolute; left: -5px; top: 40px; width: 42px; height: 58px; }

.side-tabs { flex: none; width: 16px; display: flex; flex-direction: column; background: #444; }
.side { writing-mode: vertical-rl; flex: none; background: #3a3a3a; border-top: 1px solid #333; color: #858585; padding-top: 12px; line-height: 15px; font-size: 10.5px; letter-spacing: .35px; }
.on-t { height: 158px; background: #444; color: #e4e4e4; padding-top: 12px; letter-spacing: .15px; }
.s2 { height: 106px; letter-spacing: .45px; }
.s3 { height: 110px; padding-top: 10px; }

/* timeline */
.timeline { flex: none; height: 55px; display: flex; background: #444; }
.tl-left { flex: none; width: 1214px; display: flex; flex-direction: column; overflow: hidden; }
.tl-gap { flex: none; height: 4px; background: #3a3a3a; }
.tl-ruler { flex: none; height: 48px; display: flex; }
.tl-cell { flex: none; width: 66.55px; display: flex; flex-direction: column; }
.tl-c0 { width: 62px; }
.tb { flex: none; height: 8px; background: #444; border-right: 1px solid #181818; }
.tb2 { border-top: 2px solid #666; }
.lab { flex: none; height: 16px; background: #2b2b2b; margin-right: -1px; padding-left: 6.5px; color: #98a0a8; line-height: 14px; white-space: nowrap; position: relative; }
.tl-c0 .lab { padding-left: 2px; }
.tk { flex: none; height: 16px; background: #2b2b2b; border-right: 1px solid #999; }
.tl-right { flex: 1; display: flex; align-items: flex-start; padding: 18px 0 0 9px; }
.frame { flex: none; width: 50px; height: 20px; line-height: 21px; padding-left: 7px; background: #2b2b2b; border-radius: 3px; color: #b8c4d0; }
.transport { display: flex; align-items: center; height: 20px; margin-left: 10px; }
.tp { width: 18px; height: 16px; margin-right: 10px; }
```
